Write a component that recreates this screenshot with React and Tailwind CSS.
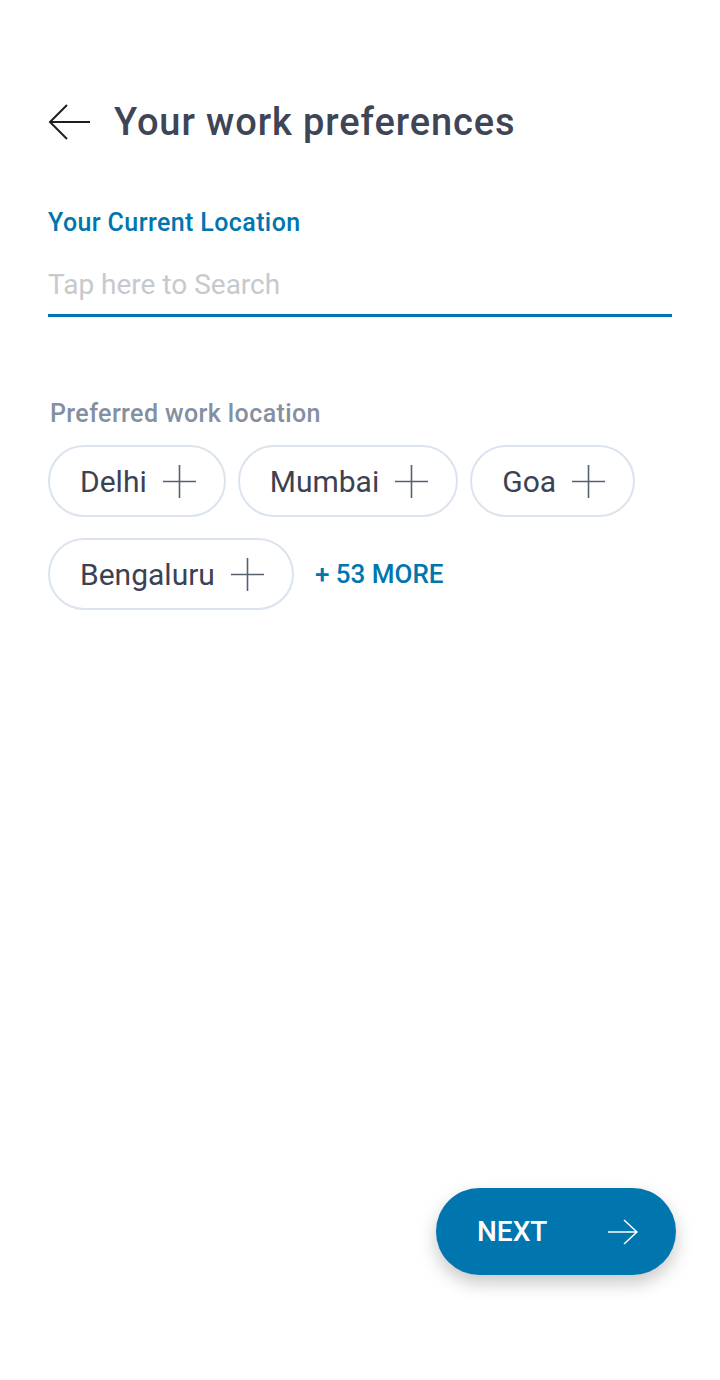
import { useState } from 'react';

const cities = ['Delhi', 'Mumbai', 'Goa', 'Bengaluru'];

function PlusIcon() {
    return (
        <svg width="33" height="33" viewBox="0 0 33 33" fill="none" stroke="#56606f" strokeWidth="1.6">
            <path d="M16.5 0v33M0 16.5h33" />
        </svg>
    );
}

function Chip({ label, onClick }) {
    return (
        <button
            type="button"
            onClick={onClick}
            className="flex items-center gap-[16px] h-[72px] pl-[30px] pr-[28px] rounded-full border-2 border-[#dbe3ee] bg-white"
        >
            <span className="text-[30px] text-[#3b4252]">{label}</span>
            <PlusIcon />
        </button>
    );
}

export default function App() {
    const [query, setQuery] = useState('');

    return (
        <div className="relative w-[720px] h-[1380px] bg-white font-['Roboto',sans-serif]">
            <div className="px-[48px] pt-[100px]">
                {/* Header */}
                <div className="flex items-center gap-[24px]">
                    <svg width="42" height="38" viewBox="0 0 42 38" fill="none" stroke="#1f1f1f" strokeWidth="2">
                        <path d="M42 19H2M19 2L2 19l17 17" />
                    </svg>
                    <h1 className="text-[38px] font-medium tracking-[0.9px] text-[#3d4556] leading-[44px]">Your work preferences</h1>
                </div>

                {/* Current location */}
                <div className="mt-[64px]">
                    <label className="block text-[25px] font-medium tracking-[0.4px] text-[#0075ae] leading-[30px]">Your Current Location</label>
                    <input
                        value={query}
                        onChange={(e) => setQuery(e.target.value)}
                        placeholder="Tap here to Search"
                        className="mt-[30px] block w-full pb-[12px] text-[28px] leading-[34px] text-[#3b4252] placeholder:text-[#c6c9cd] border-b-[3px] border-[#0075ae] outline-none"
                    />
                </div>

                {/* Preferred work location */}
                <div className="mt-[82px]">
                    <p className="pl-[2px] text-[25px] font-medium tracking-[0.4px] text-[#8490a2] leading-[30px]">Preferred work location</p>
                    <div className="mt-[16px] flex flex-wrap items-center gap-x-[12px] gap-y-[21px]">
                        {cities.map((c) => (
                            <Chip key={c} label={c} />
                        ))}
                        <button type="button" className="ml-[9px] text-[26px] font-medium text-[#0075ae]">+ 53 MORE</button>
                    </div>
                </div>
            </div>

            {/* Next button */}
            <button
                type="button"
                className="absolute left-[436px] top-[1188px] w-[240px] h-[87px] rounded-full bg-[#0075ae] shadow-[0_8px_18px_rgba(0,0,0,0.22)] flex items-center justify-between pl-[41px] pr-[38px]"
            >
                <span className="text-[28px] font-medium text-white">NEXT</span>
                <svg width="30" height="26" viewBox="0 0 30 26" fill="none" stroke="white" strokeWidth="1.5">
                    <path d="M0 13h29M16 1l13 12-13 12" />
                </svg>
            </button>
        </div>
    );
}
